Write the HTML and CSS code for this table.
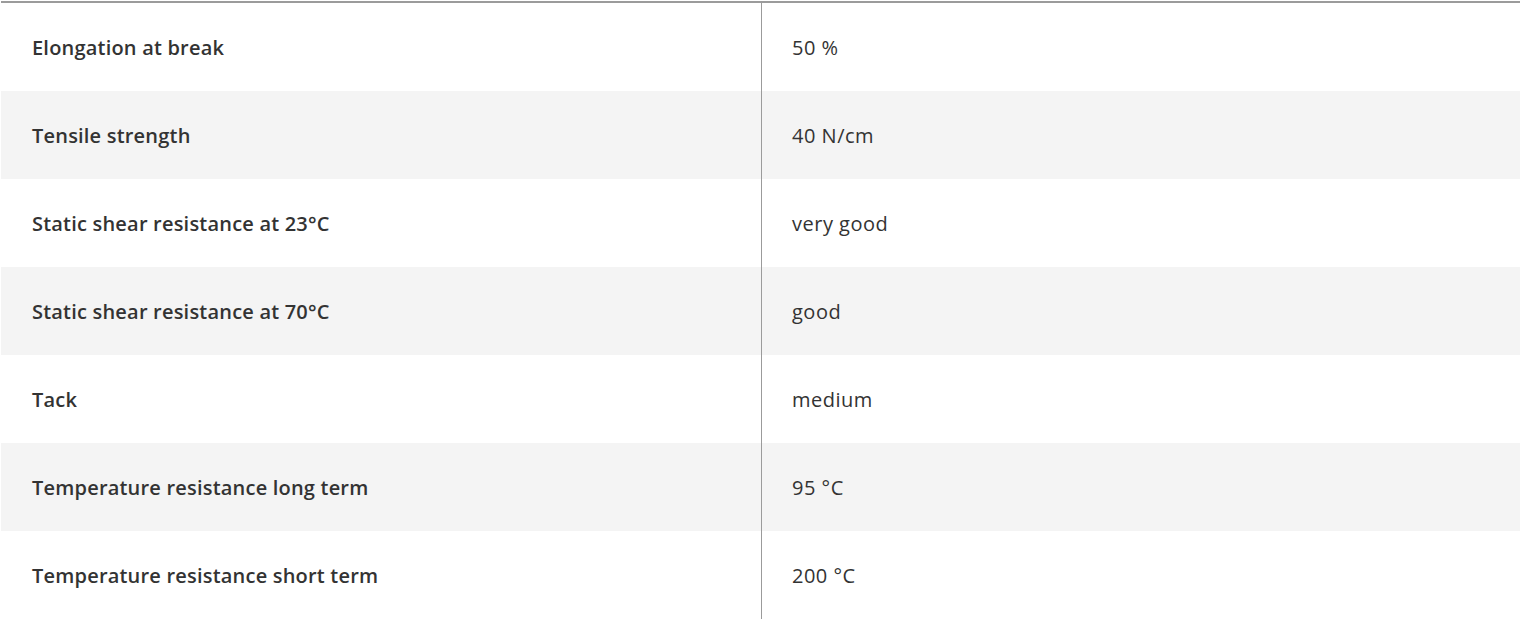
FILE: index.html
```html
<!DOCTYPE html>
<html>
<head>
<meta charset="utf-8">
<link rel="stylesheet" href="styles.css">
</head>
<body>
<div class="specs">
  <div class="row"><div class="label">Elongation at break</div><div class="value">50 %</div></div>
  <div class="row alt"><div class="label">Tensile strength</div><div class="value">40 N/cm</div></div>
  <div class="row"><div class="label">Static shear resistance at 23°C</div><div class="value">very good</div></div>
  <div class="row alt"><div class="label">Static shear resistance at 70°C</div><div class="value">good</div></div>
  <div class="row"><div class="label">Tack</div><div class="value">medium</div></div>
  <div class="row alt"><div class="label">Temperature resistance long term</div><div class="value">95 °C</div></div>
  <div class="row"><div class="label">Temperature resistance short term</div><div class="value">200 °C</div></div>
</div>
</body>
</html>
```
FILE: styles.css
```css
html, body { margin: 0; padding: 0; background: #fff; }
body { padding: 1px 0 0 1px; }
.specs {
  border-top: 2px solid #9b9b9b;
  font-family: "Open Sans", "Liberation Sans", sans-serif;
  font-size: 20px;
  color: #333;
}
.row {
  display: grid;
  grid-template-columns: 761px 1fr;
  height: 88px;
}
.row.alt { background: #f4f4f4; }
.label, .value { display: flex; align-items: center; }
.label {
  box-sizing: border-box;
  padding-left: 31px;
  font-weight: 600;
  letter-spacing: 0.2px;
  border-right: 1px solid #9b9b9b;
}
.value {
  padding-left: 30px;
  font-weight: 400;
  letter-spacing: 0.5px;
}
```
